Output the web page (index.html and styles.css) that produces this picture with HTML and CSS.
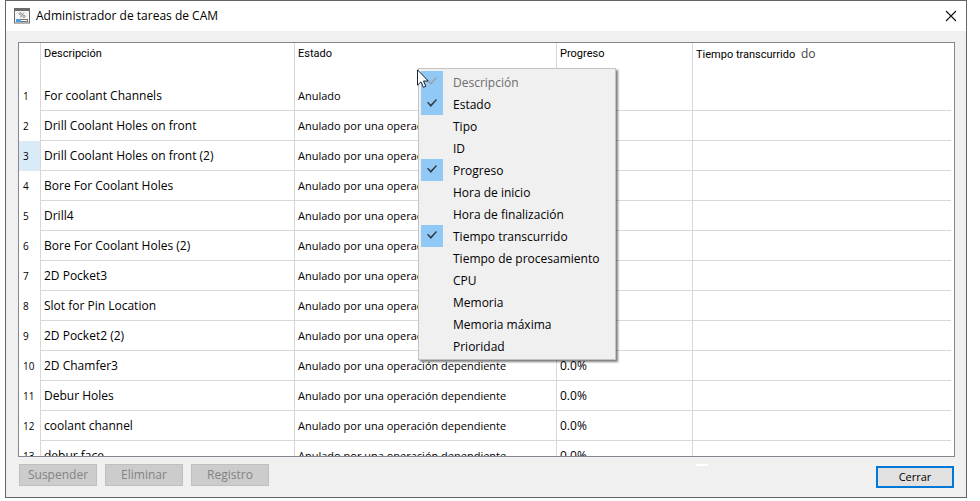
FILE: index.html
```html
<!DOCTYPE html>
<html lang="es">

<head>
    <meta charset="UTF-8">
    <meta name="viewport" content="width=device-width, initial-scale=1">
    <title>Administrador de tareas de CAM</title>
    <link rel="stylesheet" href="styles.css">
</head>

<body>
    <div class="window">
        <header class="titlebar">
            <svg class="app-icon" width="16" height="16" viewBox="0 0 16 16" aria-hidden="true">
                <rect x="0.5" y="0.5" width="15" height="14.5" fill="#f4f4f4" stroke="#6b6b6b" />
                <rect width="16" height="3" fill="#6b6b6b" />
                <g fill="none" stroke="#8a8a8a">
                    <circle cx="6.3" cy="5.7" r="1.1" />
                    <circle cx="10" cy="8.4" r="1.1" />
                    <path d="M9.8 4.6 6.5 9.4" />
                </g>
                <rect x="2.5" y="11.5" width="11" height="2" fill="#fff" stroke="#777" />
                <rect x="2" y="11" width="5" height="3" fill="#4a9fe0" />
            </svg>
            <h1 class="title">Administrador de tareas de CAM</h1>
            <button class="close-x" type="button" aria-label="Cerrar ventana">
                <svg width="12" height="12" viewBox="0 0 12 12"><path d="M1 1 11 11M11 1 1 11" stroke="#111" stroke-width="1.1" /></svg>
            </button>
        </header>

        <main class="content">
            <div class="table-box">
                <table class="tasks">
                    <colgroup>
                        <col class="col-num">
                        <col class="col-desc">
                        <col class="col-state">
                        <col class="col-progress">
                        <col>
                    </colgroup>
                    <thead>
                        <tr>
                            <th></th>
                            <th>Descripción</th>
                            <th>Estado</th>
                            <th>Progreso</th>
                            <th>Tiempo transcurrido <span class="rest">do</span></th>
                        </tr>
                    </thead>
                    <tbody>
                        <tr><th>1</th><td>For coolant Channels</td><td class="state">Anulado</td><td>0.0%</td><td></td></tr>
                        <tr><th>2</th><td>Drill Coolant Holes on front</td><td class="state">Anulado por una operación dependiente</td><td>0.0%</td><td></td></tr>
                        <tr class="current"><th>3</th><td>Drill Coolant Holes on front (2)</td><td class="state">Anulado por una operación dependiente</td><td>0.0%</td><td></td></tr>
                        <tr><th>4</th><td>Bore For Coolant Holes</td><td class="state">Anulado por una operación dependiente</td><td>0.0%</td><td></td></tr>
                        <tr><th>5</th><td>Drill4</td><td class="state">Anulado por una operación dependiente</td><td>0.0%</td><td></td></tr>
                        <tr><th>6</th><td>Bore For Coolant Holes (2)</td><td class="state">Anulado por una operación dependiente</td><td>0.0%</td><td></td></tr>
                        <tr><th>7</th><td>2D Pocket3</td><td class="state">Anulado por una operación dependiente</td><td>0.0%</td><td></td></tr>
                        <tr><th>8</th><td>Slot for Pin Location</td><td class="state">Anulado por una operación dependiente</td><td>0.0%</td><td></td></tr>
                        <tr><th>9</th><td>2D Pocket2 (2)</td><td class="state">Anulado por una operación dependiente</td><td>0.0%</td><td></td></tr>
                        <tr><th>10</th><td>2D Chamfer3</td><td class="state">Anulado por una operación dependiente</td><td>0.0%</td><td></td></tr>
                        <tr><th>11</th><td>Debur Holes</td><td class="state">Anulado por una operación dependiente</td><td>0.0%</td><td></td></tr>
                        <tr><th>12</th><td>coolant channel</td><td class="state">Anulado por una operación dependiente</td><td>0.0%</td><td></td></tr>
                        <tr><th>13</th><td>debur face</td><td class="state">Anulado por una operación dependiente</td><td>0.0%</td><td></td></tr>
                    </tbody>
                </table>
            </div>
        </main>

        <footer class="actions">
            <button class="btn" type="button" disabled>Suspender</button>
            <button class="btn" type="button" disabled>Eliminar</button>
            <button class="btn" type="button" disabled>Registro</button>
            <span class="dash"></span>
            <button class="btn btn-default" type="button">Cerrar</button>
        </footer>

        <!-- column chooser -->
        <div class="menu">
            <label class="menu-item"><input type="checkbox" checked disabled><span>Descripción</span></label>
            <label class="menu-item"><input type="checkbox" checked><span>Estado</span></label>
            <label class="menu-item"><input type="checkbox"><span>Tipo</span></label>
            <label class="menu-item"><input type="checkbox"><span>ID</span></label>
            <label class="menu-item"><input type="checkbox" checked><span>Progreso</span></label>
            <label class="menu-item"><input type="checkbox"><span>Hora de inicio</span></label>
            <label class="menu-item"><input type="checkbox"><span>Hora de finalización</span></label>
            <label class="menu-item"><input type="checkbox" checked><span>Tiempo transcurrido</span></label>
            <label class="menu-item"><input type="checkbox"><span>Tiempo de procesamiento</span></label>
            <label class="menu-item"><input type="checkbox"><span>CPU</span></label>
            <label class="menu-item"><input type="checkbox"><span>Memoria</span></label>
            <label class="menu-item"><input type="checkbox"><span>Memoria máxima</span></label>
            <label class="menu-item"><input type="checkbox"><span>Prioridad</span></label>
        </div>
        <svg class="cursor" width="12" height="20" viewBox="0 0 12 20" aria-hidden="true">
            <path d="M0.5 0.8V16.2L4 12.9 6.4 18.3 8.8 17.3 6.5 12H11.2Z" fill="#fff" stroke="#1c2030" />
        </svg>
    </div>
</body>

</html>
```

FILE: styles.css
```css
* {
    box-sizing: border-box;
}

body {
    margin: 0;
    padding: 0 13px 3px 5px;
    height: 100vh;
    background: #fff;
    color: #000;
    font-family: "Open Sans", "Noto Sans", sans-serif;
    font-size: 12px;
    line-height: 16px;
}

.window {
    position: relative;
    display: flex;
    flex-direction: column;
    height: 100%;
    border: 1px solid #646464;
    background: #f0f0f0;
}

.titlebar {
    display: flex;
    align-items: center;
    gap: 6px;
    height: 30px;
    padding: 0 9px 0 8px;
    background: #fff;
}

.title {
    flex: 1;
    margin: 0;
    font-size: 12px;
    font-weight: normal;
}

.close-x {
    display: flex;
    padding: 0;
    border: 0;
    background: none;
}

.content {
    display: flex;
    flex: 1;
    min-height: 0;
    padding: 11px 11px 0 12px;
}

.table-box {
    flex: 1;
    overflow: hidden;
    padding-right: 3px;
    border: 1px solid #828790;
    background: #fff;
}

.tasks {
    width: 100%;
    table-layout: fixed;
    border-spacing: 0;
}

.col-num {
    width: 22px;
}

.col-desc {
    width: 254px;
}

.col-state {
    width: 262px;
}

.col-progress {
    width: 136px;
}

.tasks th,
.tasks td {
    height: 30px;
    padding: 0 3px;
    border-right: 1px solid #d8d8d8;
    text-align: left;
    font-weight: normal;
    white-space: nowrap;
}

.tasks td {
    border-bottom: 1px solid #d8d8d8;
}

.tasks th:last-child,
.tasks td:last-child {
    border-right: 0;
}

.tasks thead th {
    height: 38px;
    padding-top: 3px;
    vertical-align: top;
    font-family: Roboto, "Open Sans", sans-serif;
    font-size: 11px;
}

.tasks tbody th {
    padding-left: 4px;
    font-size: 10px;
    font-weight: 500;
}

.tasks .state {
    font-size: 11px;
}

.current th {
    background: #d9ebf9;
}

.rest {
    margin-left: 3px;
    color: #444;
    font-family: "Open Sans", "Noto Sans", sans-serif;
    font-size: 12px;
}

.actions {
    display: flex;
    gap: 8px;
    padding: 7px 11px 9px 13px;
}

.btn {
    width: 78px;
    height: 22px;
    padding: 0;
    border: 1px solid #bfbfbf;
    background: #ccc;
    color: #838383;
    font: inherit;
    line-height: 16px;
}

.btn-default {
    margin: 2px 1px 0 0;
    border: 2px solid #0078d7;
    background: #e1e1e1;
    color: #000;
    font-size: 11px;
}

.dash {
    width: 12px;
    height: 2px;
    margin: 0 160px 0 auto;
    background: #fff;
}

.menu {
    position: absolute;
    top: 67px;
    left: 412px;
    width: 198px;
    padding: 2px;
    border: 1px solid #c4c4c4;
    background: #f0f0f0;
    box-shadow: 2px 2px 2px rgba(0, 0, 0, 0.5);
}

.menu-item {
    display: flex;
    align-items: center;
    gap: 10px;
    height: 22px;
}

.menu-item span {
    padding-top: 2px;
}

.menu-item input {
    appearance: none;
    width: 22px;
    height: 22px;
    margin: 0;
}

.menu-item input:checked {
    background: #90c8f6;
}

.menu-item input:checked::after {
    content: "";
    display: block;
    width: 10px;
    height: 8px;
    margin: 6px;
    background: #303a44;
    clip-path: polygon(0 45%, 10% 35%, 38% 70%, 90% 0, 100% 12%, 38% 100%);
}

.menu-item input:disabled::after {
    background: #98a2aa;
}

.menu-item input:disabled + span {
    color: #6d6d6d;
}

.cursor {
    position: absolute;
    top: 68px;
    left: 411px;
}
```
